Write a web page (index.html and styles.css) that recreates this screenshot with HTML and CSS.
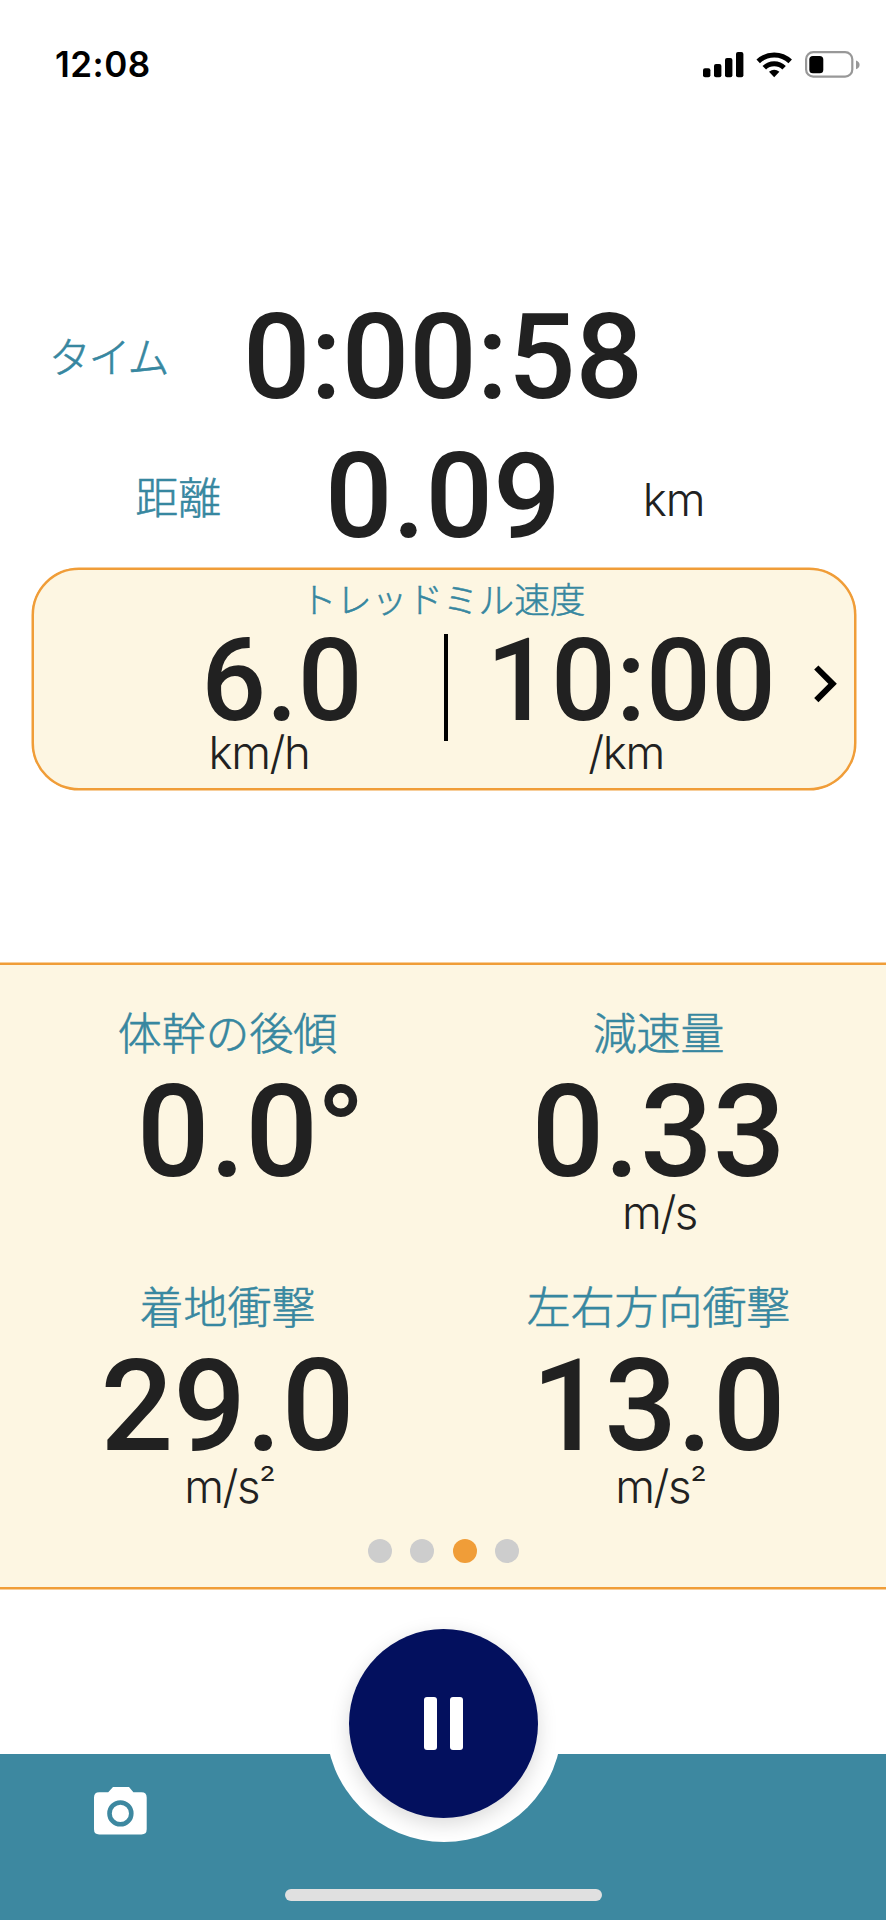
FILE: index.html
```html
<!DOCTYPE html>
<html lang="ja">
<head>
<meta charset="utf-8">
<title>トレッドミル</title>
<link rel="stylesheet" href="styles.css">
</head>
<body>
<div class="screen">
  <header class="status">
    <span class="clock">12:08</span>
    <svg class="status-icons" width="160" height="30" viewBox="700 49 160 30">
      <rect x="703" y="68.3" width="7.4" height="8.9" rx="2"/>
      <rect x="714" y="64" width="7.4" height="13.2" rx="2"/>
      <rect x="725" y="58" width="7.4" height="19.2" rx="2"/>
      <rect x="736" y="52" width="7.4" height="25.2" rx="2"/>
      <g fill="none" stroke="#000" stroke-width="5">
        <path d="M758.2 61.4A23 23 0 0 1 790.2 61.4"/>
        <path d="M764.3 67.7A14.2 14.2 0 0 1 784.1 67.7"/>
      </g>
      <path d="M774.2 77.2L769 71.8Q774.2 67.6 779.4 71.8Z"/>
      <rect x="806.1" y="52.1" width="46.2" height="24.6" rx="7.2" fill="none" stroke="#989898" stroke-width="2.2"/>
      <rect x="809.3" y="56" width="14" height="17.3" rx="3.6"/>
      <path d="M856 60.4Q859.6 61.6 859.6 64.8T856 69.2Z" fill="#989898"/>
    </svg>
  </header>

  <section class="summary">
    <div class="row row-time">
      <span class="label">タイム</span>
      <span class="value">0:00:58</span>
    </div>
    <div class="row row-distance">
      <span class="label">距離</span>
      <span class="value">0.09</span>
      <span class="unit">km</span>
    </div>
  </section>

  <section class="speed">
    <div class="speed-title">トレッドミル速度</div>
    <div class="speed-body">
      <div class="speed-col speed-kmh">
        <div class="speed-value">6.0</div>
        <div class="unit">km/h</div>
      </div>
      <div class="divider"></div>
      <div class="speed-col speed-pace">
        <div class="speed-value">10:00</div>
        <div class="unit">/km</div>
      </div>
      <svg class="chevron" width="24" height="38" viewBox="0 0 24 38">
        <path d="M2.3 2.5L18.6 18.8L2.3 35.1" fill="none" stroke="#000" stroke-width="6"/>
      </svg>
    </div>
  </section>

  <section class="panel">
    <div class="metrics">
      <div class="metric">
        <div class="label">体幹の後傾</div>
        <div class="metric-value"><span class="hang">0.0<span class="degree">°</span></span></div>
      </div>
      <div class="metric">
        <div class="label">減速量</div>
        <div class="metric-value">0.33</div>
        <div class="unit">m/s</div>
      </div>
      <div class="metric">
        <div class="label">着地衝撃</div>
        <div class="metric-value">29.0</div>
        <div class="unit">m/s<span class="square">²</span></div>
      </div>
      <div class="metric">
        <div class="label">左右方向衝撃</div>
        <div class="metric-value">13.0</div>
        <div class="unit">m/s<span class="square">²</span></div>
      </div>
    </div>
    <div class="dots">
      <i class="dot"></i><i class="dot"></i><i class="dot active"></i><i class="dot"></i>
    </div>
  </section>

  <footer class="bar">
    <svg class="camera" width="53" height="48" viewBox="0 0 53 48">
      <path fill="#fff" d="M19 0H35L39.4 5.3H47.5Q52.7 5.3 52.7 10.5V42.2Q52.7 47.4 47.5 47.4H5.2Q0 47.4 0 42.2V10.5Q0 5.3 5.2 5.3H14.2Z"/>
      <circle cx="26.4" cy="26.4" r="10.9" fill="none" stroke="#3d88a0" stroke-width="4.6"/>
    </svg>
    <div class="notch">
      <div class="pause">
        <i class="pause-bar"></i><i class="pause-bar"></i>
      </div>
    </div>
    <div class="home"></div>
  </footer>
</div>
</body>
</html>
```

FILE: styles.css
```css
* {
  box-sizing: border-box;
}

body {
  margin: 0;
  background: #fff;
  color: #212121;
  font-family: Roboto, "Noto Sans CJK JP", sans-serif;
}

.screen {
  width: 886px;
  height: 1920px;
  display: flex;
  flex-direction: column;
  overflow: hidden;
}

.status {
  flex: none;
  height: 288px;
  padding: 44px 26px 0 55px;
  display: flex;
  justify-content: space-between;
  align-items: flex-start;
}

.clock {
  font: 600 35px/41px Inter, sans-serif;
  letter-spacing: 0.5px;
  color: #000;
}

.status-icons {
  margin-top: 5px;
}

.label {
  font-family: "Noto Sans CJK JP", sans-serif;
  font-weight: 300;
  font-size: 43.9px;
  line-height: 60px;
  color: #3787a0;
  -webkit-text-stroke: 0.6px #3787a0;
  text-align: center;
  white-space: nowrap;
}

.unit {
  font-family: Inter, sans-serif;
  font-weight: 300;
  font-size: 45.6px;
  letter-spacing: -1.4px;
  text-align: center;
  white-space: nowrap;
}

.square {
  font-size: 38px;
  font-weight: 300;
  letter-spacing: -3px;
  line-height: 0;
  vertical-align: 5px;
}

.summary {
  flex: none;
  height: 280px;
}

.row {
  display: grid;
  align-items: center;
  height: 139px;
}

.row .label {
  font-size: 43px;
  padding-bottom: 4px;
}

.row .unit {
  padding-top: 6px;
  letter-spacing: -1px;
}

.row-time {
  grid-template-columns: 219px 448px 219px;
}

.row-time .label {
  font-size: 42px;
  letter-spacing: -2.2px;
  padding-right: 3px;
  padding-bottom: 6px;
}

.row-distance {
  grid-template-columns: 214.6px 314.6px 147px;
  padding-left: 71px;
}

.row-distance .label {
  padding-bottom: 3px;
}

.value {
  font-size: 118.8px;
  line-height: 139px;
  font-weight: 500;
  text-align: center;
}

.speed {
  flex: none;
  width: 824px;
  height: 222px;
  margin-left: 32px;
  border: 2px solid #f09d38;
  border-radius: 47px;
  background: #fdf6e2;
  box-shadow: 0 0 0 0.5px #f09d38;
}

.speed-title {
  font: 300 35.6px/55px "Noto Sans CJK JP", sans-serif;
  color: #3787a0;
  -webkit-text-stroke: 0.5px #3787a0;
  text-align: center;
  padding-right: 2px;
}

.speed-body {
  display: flex;
  align-items: flex-start;
  padding-left: 86px;
}

.speed-col {
  text-align: center;
}

.speed-kmh {
  width: 324px;
}

.speed-pace {
  width: 366px;
}

.speed-value {
  font-size: 114.2px;
  line-height: 112px;
  font-weight: 500;
}

.speed-col .unit {
  line-height: 31px;
}

.speed-kmh .unit {
  padding-right: 46px;
}

.speed-pace .unit {
  padding-right: 10px;
}

.divider {
  width: 4px;
  height: 107px;
  margin-top: 9px;
  background: #000;
}

.chevron {
  margin-top: 40px;
}

.panel {
  flex: none;
  height: 626px;
  margin-top: 173px;
  padding: 35px 12px 0;
  border-top: 2px solid #f09d38;
  border-bottom: 2px solid #f09d38;
  background: #fdf6e2;
  box-shadow: 0 0 0 0.5px #f09d38;
}

.metrics {
  display: grid;
  grid-template-columns: 431px 431px;
  grid-auto-rows: 222px;
  row-gap: 52px;
}

.metric .label {
  padding-top: 1px;
  height: 60px;
}

.metric-value {
  font-size: 128.2px;
  line-height: 144px;
  font-weight: 500;
  text-align: center;
}

.metric .unit {
  line-height: 18px;
  padding-left: 2px;
}

/* The degree sign hangs outside the centred number. */
.hang {
  position: relative;
}

.degree {
  position: absolute;
  left: 100%;
  top: 0;
  margin-left: -2px;
  line-height: 1.172;
}

.dots {
  display: flex;
  justify-content: center;
  gap: 18.6px;
  margin-top: 43px;
  padding-left: 1px;
}

.dot {
  width: 24px;
  height: 24px;
  border-radius: 50%;
  background: #cdcdcd;
}

.dot.active {
  background: #f09d38;
}

.bar {
  flex: none;
  position: relative;
  height: 166px;
  margin-top: 165px;
  padding: 33px 0 0 94.3px;
  background: #3d88a0;
}

.camera {
  display: block;
}

/* White circle and button overlap the bar's top edge. */
.notch {
  position: absolute;
  left: 325.5px;
  top: -148.5px;
  width: 236px;
  height: 236px;
  border-radius: 50%;
  background: #fff;
  display: flex;
  align-items: center;
  justify-content: center;
}

.pause {
  width: 189px;
  height: 189px;
  border-radius: 50%;
  background: #03105e;
  box-shadow: 0 6px 20px rgba(0, 0, 0, 0.15);
  display: flex;
  align-items: center;
  justify-content: center;
  gap: 13.6px;
}

.pause-bar {
  width: 12.5px;
  height: 53px;
  border-radius: 3px;
  background: #fff;
}

.home {
  position: absolute;
  left: 285px;
  bottom: 19px;
  width: 317px;
  height: 12px;
  border-radius: 6px;
  background: #e0e0e0;
}
```
